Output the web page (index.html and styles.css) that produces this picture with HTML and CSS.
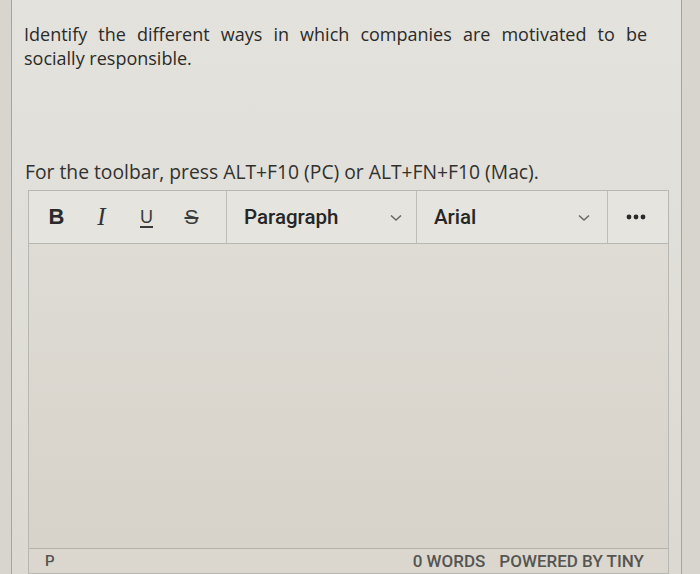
FILE: index.html
```html
<!DOCTYPE html>
<html lang="en">
<head>
<meta charset="utf-8">
<title>Question</title>
<link rel="stylesheet" href="styles.css">
</head>
<body>
<div class="panel">
  <p class="question">Identify the different ways in which companies are motivated to be socially responsible.</p>
  <p class="hint">For the toolbar, press ALT+F10 (PC) or ALT+FN+F10 (Mac).</p>
  <div class="editor">
    <div class="toolbar">
      <div class="group format">
        <span class="btn b">B</span>
        <span class="btn i">I</span>
        <span class="btn u">U</span>
        <span class="btn s">S</span>
      </div>
      <div class="group select para">
        <span class="label">Paragraph</span>
        <svg class="chev" width="12" height="8" viewBox="0 0 12 8"><path d="M1 1.5 L6 6 L11 1.5" fill="none" stroke="#6a6a66" stroke-width="1.6"/></svg>
      </div>
      <div class="group select font">
        <span class="label">Arial</span>
        <svg class="chev" width="12" height="8" viewBox="0 0 12 8"><path d="M1 1.5 L6 6 L11 1.5" fill="none" stroke="#6a6a66" stroke-width="1.6"/></svg>
      </div>
      <div class="group more">
        <svg width="20" height="6" viewBox="0 0 20 6"><circle cx="3" cy="3" r="2.4" fill="#2a2a2a"/><circle cx="10" cy="3" r="2.4" fill="#2a2a2a"/><circle cx="17" cy="3" r="2.4" fill="#2a2a2a"/></svg>
      </div>
    </div>
    <div class="content"></div>
    <div class="status">
      <span class="path">P</span>
      <span class="counts"><span class="words">0 WORDS</span><span class="brand">POWERED BY TINY</span></span>
    </div>
  </div>
</div>
</body>
</html>
```

FILE: styles.css
```css
html, body {
  margin: 0;
  padding: 0;
}
body {
  background: #d8d5cf;
  width: 700px;
  height: 574px;
  overflow: hidden;
  font-family: "Open Sans", "Noto Sans", sans-serif;
}
.panel {
  margin-left: 11px;
  width: 671px;
  height: 574px;
  box-sizing: border-box;
  border-left: 1px solid #a6a49f;
  border-right: 1px solid #a6a49f;
  background: linear-gradient(180deg, #e3e2dd 0%, #e1dfd9 40%, #dcd9d2 100%);
  padding-left: 12px;
  padding-top: 22px;
}
.question {
  margin: 0;
  width: 623px;
  font-size: 18px;
  line-height: 24px;
  color: #2b2b29;
  text-align: justify;
}
.hint {
  margin: 89px 0 0 1px;
  font-size: 19.3px;
  line-height: 26px;
  color: #31312f;
}
.editor {
  margin-top: 5px;
  margin-left: 4px;
  width: 641px;
  height: 384px;
  box-sizing: border-box;
  border: 1px solid #b9b7b1;
  display: flex;
  flex-direction: column;
}
.toolbar {
  height: 53px;
  box-sizing: border-box;
  border-bottom: 1px solid #b9b7b1;
  background: #e5e4df;
  display: flex;
  align-items: stretch;
}
.group {
  display: flex;
  align-items: center;
  border-right: 1px solid #bebcb6;
}
.format {
  width: 198px;
  padding-left: 5px;
  box-sizing: border-box;
}
.btn {
  width: 45px;
  text-align: center;
  color: #2a2a2a;
  line-height: 26px;
}
.b {
  font-family: "Liberation Sans", Arial, sans-serif;
  font-weight: bold;
  font-size: 22px;
}
.i {
  font-family: "Liberation Serif", "Times New Roman", serif;
  font-style: italic;
  font-size: 25px;
  color: #333;
}
.u {
  font-family: "Liberation Sans", Arial, sans-serif;
  font-size: 18px;
  text-decoration: underline;
  text-decoration-thickness: 2px;
  text-underline-offset: 3px;
  color: #3a3a3a;
}
.s {
  font-family: "Liberation Sans", Arial, sans-serif;
  font-size: 21px;
  text-decoration: line-through;
  text-decoration-thickness: 2px;
  color: #3a3a3a;
}
.select {
  justify-content: space-between;
  box-sizing: border-box;
}
.para {
  width: 190px;
  padding: 0 14px 0 17px;
}
.font {
  width: 191px;
  padding: 0 17px 0 17px;
}
.label {
  font-family: Roboto, "Noto Sans", sans-serif;
  font-weight: 500;
  font-size: 20.5px;
  color: #262626;
}
.chev {
  margin-top: 2px;
}
.more {
  flex: 1;
  border-right: none;
  justify-content: center;
  padding-right: 4px;
}
.content {
  flex: 1;
  background: linear-gradient(180deg, #dedcd5 0%, #dad6ce 60%, #d7d3cb 100%);
}
.status {
  height: 25px;
  box-sizing: border-box;
  border-top: 1px solid #b5b3ad;
  background: #dbd7cf;
  display: flex;
  align-items: center;
  justify-content: space-between;
  padding: 0 24px 0 16px;
  font-family: Roboto, "Noto Sans", sans-serif;
  font-weight: 500;
  font-size: 17px;
  color: #555551;
}
.path {
  font-size: 15px;
}
.counts {
  display: flex;
  gap: 14px;
}
```
